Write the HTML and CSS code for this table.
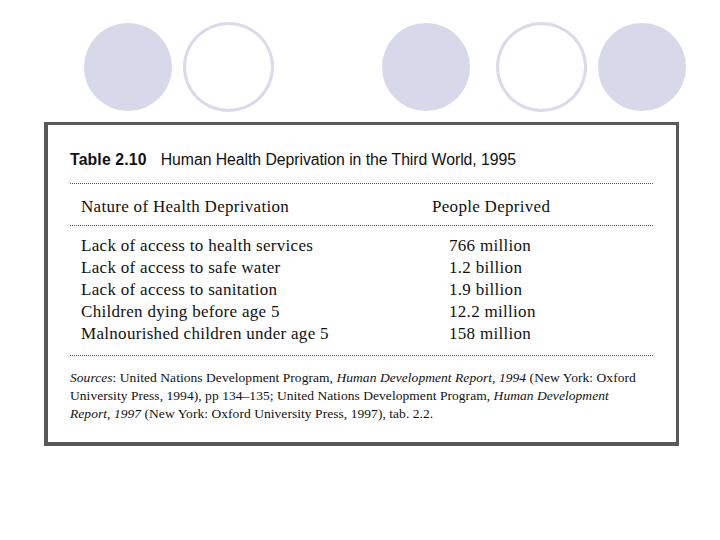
FILE: index.html
```html
<!DOCTYPE html>
<html>
<head>
<meta charset="utf-8">
<link rel="stylesheet" href="styles.css">
</head>
<body>
<div class="dots">
  <span class="dot fill d1"></span>
  <span class="dot ring d2"></span>
  <span class="dot fill d3"></span>
  <span class="dot ring d4"></span>
  <span class="dot fill d5"></span>
</div>
<div class="frame">
  <div class="title"><b>Table 2.10</b><span class="title-text">Human Health Deprivation in the Third World, 1995</span></div>
  <div class="rule r1"></div>
  <div class="grid head">
    <div class="c1">Nature of Health Deprivation</div>
    <div class="c2">People Deprived</div>
  </div>
  <div class="rule r2"></div>
  <div class="grid body">
    <div class="c1">Lack of access to health services</div><div class="c2 val">766 million</div>
    <div class="c1">Lack of access to safe water</div><div class="c2 val">1.2 billion</div>
    <div class="c1">Lack of access to sanitation</div><div class="c2 val">1.9 billion</div>
    <div class="c1">Children dying before age 5</div><div class="c2 val">12.2 million</div>
    <div class="c1">Malnourished children under age 5</div><div class="c2 val">158 million</div>
  </div>
  <div class="rule r3"></div>
  <p class="sources"><i>Sources</i>: United Nations Development Program, <i>Human Development Report, 1994</i> (New York: Oxford<br>University Press, 1994), pp 134–135; United Nations Development Program, <i>Human Development<br>Report, 1997</i> (New York: Oxford University Press, 1997), tab. 2.2.</p>
</div>
</body>
</html>
```
FILE: styles.css
```css
html, body {
  margin: 0;
  padding: 0;
  background: #ffffff;
}
body {
  width: 720px;
  height: 540px;
  overflow: hidden;
  font-family: "Liberation Serif", serif;
  color: #111;
}
.dots {
  display: flex;
  align-items: center;
  height: 90px;
  padding-top: 22px;
}
.dot {
  display: block;
  border-radius: 50%;
  box-sizing: border-box;
}
.fill {
  width: 88px;
  height: 88px;
  background: #d8d8eb;
}
.ring {
  width: 91px;
  height: 90px;
  border: 3.5px solid #dadaea;
}
.d1 { margin-left: 84px; }
.d2 { margin-left: 11px; }
.d3 { margin-left: 108px; }
.d4 { margin-left: 26px; }
.d5 { margin-left: 11px; }

.frame {
  margin-top: 10px;
  margin-left: 44px;
  width: 635px;
  height: 324px;
  box-sizing: border-box;
  border: 3px solid #595959;
  border-left-width: 4px;
  border-bottom-width: 4px;
  padding: 26px 23px 0 22px;
}
.title {
  font-family: "Liberation Sans", Arial, sans-serif;
  font-size: 15.8px;
  line-height: 18px;
  white-space: nowrap;
  color: #111;
}
.title b { font-weight: bold; letter-spacing: 0.15px; }
.title-text { margin-left: 14px; letter-spacing: -0.05px; }
.rule {
  border-top: 1px dotted #555;
  height: 0;
}
.r1 { margin-top: 14px; }
.r2 { margin-top: 7px; }
.r3 { margin-top: 10px; }
.grid {
  display: grid;
  grid-template-columns: 351px 1fr;
  padding-left: 11px;
  font-size: 17px;
  letter-spacing: 0.3px;
  line-height: 22px;
  white-space: nowrap;
}
.head { margin-top: 12px; }
.body { margin-top: 9px; }
.val { padding-left: 17px; }
.sources {
  margin: 13px 0 0 0;
  font-size: 13.5px;
  line-height: 18px;
  letter-spacing: 0.05px;
  white-space: nowrap;
}
```
